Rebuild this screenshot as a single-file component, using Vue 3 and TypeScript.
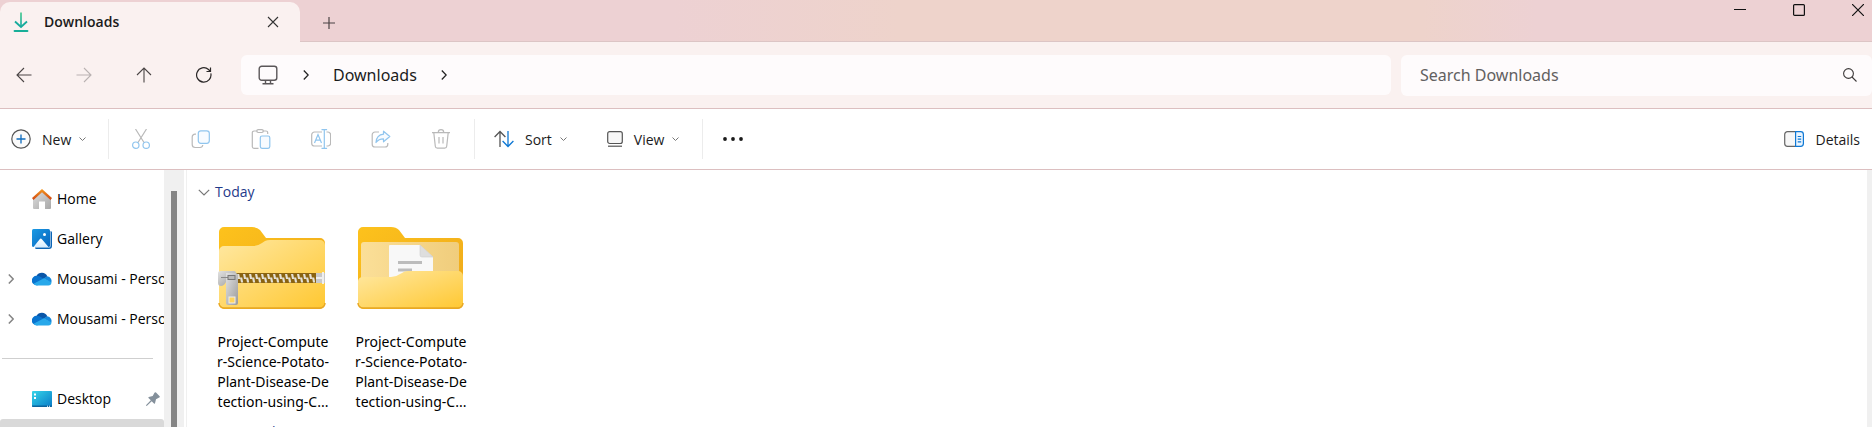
<script setup lang="ts">
interface SideLink { label: string; icon: 'home' | 'gallery' | 'cloud'; expandable: boolean }
interface Entry { id: string; kind: 'zip' | 'folder'; lines: string[] }

const tabTitle = 'Downloads'
const sideLinks: SideLink[] = [
  { label: 'Home', icon: 'home', expandable: false },
  { label: 'Gallery', icon: 'gallery', expandable: false },
  { label: 'Mousami - Personal', icon: 'cloud', expandable: true },
  { label: 'Mousami - Personal', icon: 'cloud', expandable: true },
]
const nameLines = ['Project-Compute', 'r-Science-Potato-', 'Plant-Disease-De', 'tection-using-C...']
const entries: Entry[] = [
  { id: 'archive', kind: 'zip', lines: nameLines },
  { id: 'extracted', kind: 'folder', lines: nameLines },
]
const teeth = Array.from({ length: 13 }, (_, i) => 19 + i * 6)
</script>

<template>
  <div class="window">
    <header class="titlebar">
      <div class="tab">
        <svg class="tab-icon" width="16" height="20" viewBox="0 0 16 20" fill="none">
          <defs>
            <linearGradient id="dl" x1="0" y1="0" x2="0" y2="1">
              <stop offset="0" stop-color="#3cc78a" /><stop offset="1" stop-color="#10a7a0" />
            </linearGradient>
          </defs>
          <path d="M7.2 0.5h1.6v14h-1.6z" fill="url(#dl)" />
          <path d="M2 9.5l6 5.5 6-5.5" stroke="#17ab9c" stroke-width="1.8" />
          <path d="M1.5 19h13" stroke="#17ae98" stroke-width="1.8" stroke-linecap="round" />
        </svg>
        <span class="tab-title">{{ tabTitle }}</span>
        <button class="plain tab-close" aria-label="Close tab">
          <svg width="12" height="12" viewBox="0 0 12 12"><path d="M1 1l10 10M11 1L1 11" stroke="#333" stroke-width="1.1" /></svg>
        </button>
      </div>
      <button class="plain new-tab" aria-label="New tab">
        <svg width="12" height="12" viewBox="0 0 12 12"><path d="M6 0v12M0 6h12" stroke="#4b4344" stroke-width="1.2" /></svg>
      </button>
      <div class="window-controls">
        <button class="plain" aria-label="Minimize">
          <svg width="12" height="12" viewBox="0 0 12 12"><path d="M0 5.5h12" stroke="#111" /></svg>
        </button>
        <button class="plain" aria-label="Maximize">
          <svg width="12" height="12" viewBox="0 0 12 12"><rect x=".6" y=".6" width="10.8" height="10.8" rx="1" fill="none" stroke="#111" stroke-width="1.2" /></svg>
        </button>
        <button class="plain" aria-label="Close">
          <svg width="12" height="12" viewBox="0 0 12 12"><path d="M0 0l12 12M12 0L0 12" stroke="#111" stroke-width="1.2" /></svg>
        </button>
      </div>
    </header>

    <div class="navbar">
      <nav class="nav-buttons" aria-label="History">
        <button class="plain" aria-label="Back">
          <svg width="16" height="16" viewBox="0 0 16 16" fill="none" stroke="#4a4545" stroke-width="1.1"><path d="M15.5 8H1M8 1L1 8l7 7" /></svg>
        </button>
        <button class="plain" aria-label="Forward" disabled>
          <svg width="16" height="16" viewBox="0 0 16 16" fill="none" stroke="#b9b2b2" stroke-width="1.1"><path d="M.5 8H15M8 1l7 7-7 7" /></svg>
        </button>
        <button class="plain" aria-label="Up">
          <svg width="16" height="16" viewBox="0 0 16 16" fill="none" stroke="#4a4545" stroke-width="1.1"><path d="M8 15.500V1M1 8l7-7 7 7" /></svg>
        </button>
        <button class="plain" aria-label="Refresh">
          <svg width="16" height="16" viewBox="0 0 16 16" fill="none" stroke="#2b2828" stroke-width="1.2"><path d="M14.800 6.300A7.200 7.200 0 1 1 12.500 2.500L14 4M14.500 .5v4h-4" /></svg>
        </button>
      </nav>
      <div class="address">
        <svg class="pc" width="20" height="20" viewBox="0 0 20 20" fill="none" stroke="#5b5759" stroke-width="1.4">
          <rect x="1.200" y="1.200" width="17.600" height="14" rx="2.500" /><path d="M7.500 15.500v3M12.500 15.500v3M4.500 18.800h11" />
        </svg>
        <svg class="crumb-sep" width="6" height="10" viewBox="0 0 6 10" fill="none" stroke="#222" stroke-width="1.3"><path d="M.8.5L5.200 5 .8 9.500" /></svg>
        <a class="crumb" href="#downloads">Downloads</a>
        <svg class="crumb-sep" width="6" height="10" viewBox="0 0 6 10" fill="none" stroke="#222" stroke-width="1.3"><path d="M.8.5L5.200 5 .8 9.500" /></svg>
      </div>
      <label class="search">
        <input type="search" placeholder="Search Downloads" aria-label="Search Downloads" />
        <svg width="14" height="14" viewBox="0 0 14 14" fill="none" stroke="#3d3939" stroke-width="1.1"><circle cx="5.500" cy="5.500" r="4.900" /><path d="M9 9l4.500 4.500" /></svg>
      </label>
    </div>

    <div class="toolbar" role="toolbar" aria-label="Commands">
      <button class="plain command new">
        <svg width="20" height="20" viewBox="0 0 20 20" fill="none"><circle cx="10" cy="10" r="9.200" fill="#fafafa" stroke="#555" stroke-width="1.200" /><path d="M10 5.500v9M5.500 10h9" stroke="#0f6cbd" stroke-width="1.300" /></svg>
        <span>New</span>
        <svg class="caret" width="7" height="5" viewBox="0 0 7 5" fill="none" stroke="#777"><path d="M.5.5l3 3 3-3" /></svg>
      </button>
      <div class="edit-group">
        <button class="plain" aria-label="Cut" disabled>
          <svg width="20" height="20" viewBox="0 0 20 20" fill="none" stroke-width="1.200"><path d="M4.500 0l8.500 13.500M15.500 0L7 13.500" stroke="#b9b9b9" /><circle cx="4.800" cy="16.200" r="3.200" stroke="#90c5ee" /><circle cx="15.200" cy="16.200" r="3.200" stroke="#90c5ee" /></svg>
        </button>
        <button class="plain" aria-label="Copy" disabled>
          <svg width="20" height="20" viewBox="0 0 20 20" fill="none" stroke-width="1.200"><path d="M5 5.200H4A2.800 2.800 0 0 0 1.200 8v7.500A3 3 0 0 0 4.200 18.500H9a3 3 0 0 0 2.800-2.500" stroke="#b9b9b9" /><rect x="7.300" y="1.800" width="11" height="12.500" rx="2.500" fill="#f7fbff" stroke="#90c5ee" /></svg>
        </button>
        <button class="plain" aria-label="Paste" disabled>
          <svg width="20" height="20" viewBox="0 0 20 20" fill="none" stroke-width="1.200"><path d="M6 2H3a1.700 1.700 0 0 0-1.700 1.700v14A1.700 1.700 0 0 0 3 19.300h4.500M12 2h3a1.700 1.700 0 0 1 1.700 1.700V5" stroke="#b9b9b9" /><rect x="5.800" y=".7" width="6.500" height="2.800" rx="1.400" stroke="#b9b9b9" /><rect x="9.300" y="7" width="9.500" height="12.300" rx="1.700" fill="#f7fbff" stroke="#90c5ee" /></svg>
        </button>
        <button class="plain" aria-label="Rename" disabled>
          <svg width="20" height="20" viewBox="0 0 20 20" fill="none" stroke-width="1.200"><path d="M11 3H3.500A2.800 2.800 0 0 0 .7 5.800v8.400A2.800 2.800 0 0 0 3.500 17H11M15.500 3h1.300a2.800 2.800 0 0 1 2.800 2.800v8.400a2.800 2.800 0 0 1-2.800 2.800h-1.300" stroke="#b9b9b9" /><path d="M3.500 14L7 5.500l3.500 8.500M4.700 11.200h4.600M13.300 .8v18.400M10.500 .6h5.600M10.500 19.400h5.600" stroke="#90c5ee" /></svg>
        </button>
        <button class="plain" aria-label="Share" disabled>
          <svg width="20" height="20" viewBox="0 0 20 20" fill="none" stroke-width="1.200" stroke-linejoin="round"><path d="M8 3H4A2.800 2.800 0 0 0 1.200 5.800v9.400A2.800 2.800 0 0 0 4 18h10a2.800 2.800 0 0 0 2.800-2.800V14" stroke="#b9b9b9" /><path d="M12.500 2.200l6.300 5.300-6.300 5.300V9.900c-3.500 0-5.600 1-7.500 3.600.3-4.800 3-7.800 7.500-8.300z" fill="#f7fbff" stroke="#90c5ee" /></svg>
        </button>
        <button class="plain" aria-label="Delete" disabled>
          <svg width="20" height="20" viewBox="0 0 20 20" fill="none" stroke="#b9b9b9" stroke-width="1.200"><path d="M1 3.600h18M7.300 3.400a2.700 2.700 0 0 1 5.400 0M2.800 3.800l1.500 13.500a2 2 0 0 0 2 1.900h7.400a2 2 0 0 0 2-1.900l1.500-13.500M8 8v6.500M12 8v6.500" /></svg>
        </button>
      </div>
      <div class="view-group">
        <button class="plain command">
          <svg width="20" height="18" viewBox="0 0 20 18" fill="none" stroke-width="1.300"><path d="M6 17V1.500M.6 7L6 1.500 11.400 7" stroke="#555" /><path d="M14 1v15.500M8.600 11l5.400 5.500 5.400-5.500" stroke="#0f78d4" /></svg>
          <span>Sort</span>
          <svg class="caret" width="7" height="5" viewBox="0 0 7 5" fill="none" stroke="#777"><path d="M.5.5l3 3 3-3" /></svg>
        </button>
        <button class="plain command view">
          <svg width="16" height="16" viewBox="0 0 16 16" fill="none" stroke="#555" stroke-width="1.200"><rect x=".7" y=".7" width="14.600" height="11.800" rx="2" fill="#f7f7f7" /><path d="M1 15.200h14" /></svg>
          <span>View</span>
          <svg class="caret" width="7" height="5" viewBox="0 0 7 5" fill="none" stroke="#777"><path d="M.5.5l3 3 3-3" /></svg>
        </button>
      </div>
      <button class="plain more" aria-label="See more">
        <svg width="20" height="4" viewBox="0 0 20 4" fill="#1a1a1a"><circle cx="2" cy="2" r="1.900" /><circle cx="10" cy="2" r="1.900" /><circle cx="18" cy="2" r="1.900" /></svg>
      </button>
      <button class="plain command details">
        <svg width="20" height="16" viewBox="0 0 20 16" fill="none" stroke-width="1.200"><path d="M12 .7H3.500A2.800 2.800 0 0 0 .7 3.500v9a2.800 2.800 0 0 0 2.800 2.800H12" fill="#f7f7f7" stroke="#666" /><path d="M11.600.7h5a2.800 2.800 0 0 1 2.800 2.800v9a2.800 2.800 0 0 1-2.800 2.800h-5zM13.700 5.500h3.500M13.700 8.200h3.500M13.700 10.900h3.500" fill="#eaf5ff" stroke="#0f78d4" /></svg>
        <span>Details</span>
      </button>
    </div>

    <div class="body">
      <aside class="sidebar">
        <nav class="tree" aria-label="Navigation pane">
          <a v-for="(item, i) in sideLinks" :key="i" class="tree-row" href="#">
            <span class="twist"><svg v-if="item.expandable" width="6" height="10" viewBox="0 0 6 10" fill="none" stroke="#858585" stroke-width="1.500"><path d="M.8.5L5.200 5 .8 9.500" /></svg></span>
            <svg v-if="item.icon === 'home'" width="20" height="20" viewBox="0 0 20 20">
              <defs>
                <linearGradient id="wall" x1="0" y1="0" x2="1" y2="1"><stop offset="0" stop-color="#dedede" /><stop offset="1" stop-color="#a8a8a8" /></linearGradient>
                <linearGradient id="roof" x1="0" y1="0" x2="0" y2="1"><stop offset="0" stop-color="#f59a20" /><stop offset="1" stop-color="#cf4513" /></linearGradient>
              </defs>
              <path d="M1 9.500L10 1.500l9 8V19a1 1 0 0 1-1 1h-5v-7.500H7V20H2a1 1 0 0 1-1-1z" fill="url(#wall)" />
              <path d="M10 0l10 9-1.500 2L10 3.200 1.500 11 0 9z" fill="url(#roof)" />
            </svg>
            <svg v-else-if="item.icon === 'gallery'" width="20" height="20" viewBox="0 0 20 20">
              <defs>
                <linearGradient id="pic" x1="0" y1="0" x2="1" y2="1"><stop offset="0" stop-color="#1a9ae4" /><stop offset="1" stop-color="#0864bd" /></linearGradient>
                <linearGradient id="peak" x1="0" y1="0" x2="0" y2="1"><stop offset="0" stop-color="#fff" /><stop offset="1" stop-color="#d5edff" /></linearGradient>
              </defs>
              <path d="M3 18.500h14a1.500 1.500 0 0 0 1.500-1.500V2a1.500 1.500 0 0 1 1.500 1.500V17a3 3 0 0 1-3 3H4.500A1.500 1.500 0 0 1 3 18.500z" fill="#0b64b5" />
              <rect width="18" height="18" rx="1.500" fill="url(#pic)" />
              <path d="M1.500 18l6.200-7.800a1.400 1.400 0 0 1 2.200 0L16.500 18z" fill="url(#peak)" /><circle cx="12.500" cy="5.500" r="1.500" fill="#fff" />
            </svg>
            <svg v-else width="20" height="14" viewBox="0 0 20 14">
              <path d="M4.500 4A6 6 0 0 1 15.300 4.300L11 8z" fill="#0a56a8" />
              <path d="M4.500 3.800A5 5 0 0 1 7.500 4.200L13 7.500 6 13.200H4.500A4.600 4.600 0 0 1 4.500 3.800z" fill="#0873cf" />
              <path d="M11.500 6.600L15.300 4.300A4.600 4.600 0 0 1 19 11z" fill="#1488dc" />
              <path d="M1.600 11.800L12 6.200l7.500 4.300A3.300 3.300 0 0 1 16 13.500H4.500a4 4 0 0 1-2.900-1.700z" fill="#28a8ea" />
            </svg>
            <span class="tree-label">{{ item.label }}</span>
          </a>
          <hr class="divider" />
          <a class="tree-row" href="#desktop">
            <span class="twist"></span>
            <svg width="20" height="16" viewBox="0 0 20 16">
              <defs><linearGradient id="desk" x1="0" y1="0" x2="1" y2="1"><stop offset="0" stop-color="#35d5e8" /><stop offset="1" stop-color="#087bc8" /></linearGradient></defs>
              <rect width="20" height="16" rx="1" fill="url(#desk)" /><path d="M0 14.500h20V15a1 1 0 0 1-1 1H1a1 1 0 0 1-1-1z" fill="#0b639c" />
              <path d="M2 2.500h2v2H2zM2 6h2v2H2zM15 14.700h1v1h-1zM17 14.700h1v1h-1z" fill="#fff" />
            </svg>
            <span class="tree-label">Desktop</span>
            <svg class="pin" width="14" height="14" viewBox="0 0 14 14"><path d="M8.500.8a1 1 0 0 1 1.500-.2L13.400 4a1 1 0 0 1-.2 1.600L10 7.300 9 11.200a.6.6 0 0 1-1 .3L5.700 9.200 1 13.800l-.9.1.1-.9L4.800 8.300 2.500 6a.6.6 0 0 1 .3-1l3.900-1z" fill="#84909b" /></svg>
          </a>
          <div class="selected-row"></div>
        </nav>
        <div class="track"><div class="thumb"></div></div>
      </aside>
      <main class="files">
        <h2 class="group">
          <svg width="12" height="7" viewBox="0 0 12 7" fill="none" stroke="#777" stroke-width="1.200"><path d="M.8.8L6 6 11.200.8" /></svg>
          <span>Today</span>
        </h2>
        <div class="grid">
          <a v-for="entry in entries" :key="entry.id" class="entry" href="#">
            <svg v-if="entry.kind === 'zip'" class="zip" width="108" height="84" viewBox="1 0 108 84">
              <defs>
                <linearGradient id="zb" x1="0" y1="0" x2="1" y2="1"><stop offset="0" stop-color="#fdc21c" /><stop offset="1" stop-color="#eda71b" /></linearGradient>
                <linearGradient id="zf" x1="0" y1="0" x2="1" y2="1"><stop offset="0" stop-color="#ffe8a2" /><stop offset="1" stop-color="#ffc832" /></linearGradient>
                <linearGradient id="metal" x1="0" y1="0" x2="1" y2="1"><stop offset="0" stop-color="#e2e2e2" /><stop offset="1" stop-color="#9a9a9a" /></linearGradient>
              </defs>
              <path d="M1 6a5 5 0 0 1 5-5h28q5 0 8 3l6 8h54a5 5 0 0 1 5 5v61a5 5 0 0 1-5 5H6a5 5 0 0 1-5-5z" fill="url(#zb)" />
              <path d="M1 25a5 5 0 0 1 5-5h29q5 0 9-3l3-2q2-1 5-1h50a5 5 0 0 1 5 5v58a5 5 0 0 1-5 5H6a5 5 0 0 1-5-5z" fill="url(#zf)" />
              <path d="M1 77a5 5 0 0 0 5 5h96a5 5 0 0 0 5-5" fill="none" stroke="#e8a824" stroke-width="1.500" />
              <rect x="18" y="47" width="82" height="10" fill="#8a6310" />
              <g v-for="x in teeth" :key="x" fill="#e5e1d6"><path :d="`M${x} 48h2.200l1 5h-2.200zM${x + 3} 51.500h2.200l1 5h-2.200z`" /></g>
              <path d="M98 47h9v10h-9z" fill="#c9c9c9" /><path d="M98 52h7M105 46v12" stroke="#efefef" stroke-width="2" />
              <path d="M0 47q0-2 3-2h13a2 2 0 0 1 2 2v9H8q-2 4-5 4-3 0-3-3z" fill="url(#metal)" />
              <path d="M8 47h9a3 3 0 0 1 3 3v27a2 2 0 0 1-2 2h-8a2 2 0 0 1-2-2z" fill="url(#metal)" />
              <path d="M3 51.500h12" stroke="#8b8b8b" /><rect x="10" y="49.500" width="7" height="4" fill="#b8b8b8" stroke="#777" />
              <rect x="11" y="71" width="6" height="6" fill="#ffd45b" stroke="#eee" />
            </svg>
            <svg v-else width="108" height="84" viewBox="0 0 108 84">
              <defs>
                <linearGradient id="ob" x1="0" y1="0" x2="1" y2="1"><stop offset="0" stop-color="#fdc21c" /><stop offset="1" stop-color="#eda71b" /></linearGradient>
                <linearGradient id="of" x1="0" y1="0" x2="1" y2="1"><stop offset="0" stop-color="#ffe8a2" /><stop offset="1" stop-color="#ffc832" /></linearGradient>
                <linearGradient id="oi" x1="0" y1="0" x2="1" y2="0"><stop offset="0" stop-color="#fbdf98" /><stop offset="1" stop-color="#f0cd7c" /></linearGradient>
              </defs>
              <path d="M1 6a5 5 0 0 1 5-5h28q5 0 8 3l6 8h53a5 5 0 0 1 5 5v61a5 5 0 0 1-5 5H6a5 5 0 0 1-5-5z" fill="url(#ob)" />
              <rect x="4" y="16" width="98" height="44" rx="3" fill="url(#oi)" />
              <path d="M32 20a1 1 0 0 1 1-1h30l13 12v30H32z" fill="#f8f8f8" /><path d="M63 19l13 12H65a2 2 0 0 1-2-2z" fill="#dedede" stroke="#cfcfcf" stroke-width=".6" />
              <path d="M41 36.500h24M41 44h14" stroke="#bcbcbc" stroke-width="3" />
              <path d="M1 55a5 5 0 0 1 5-4h28q5 0 9-3l2-1q2-2 6-2h50a5 5 0 0 1 5 5v27a5 5 0 0 1-5 5H6a5 5 0 0 1-5-5z" fill="url(#of)" />
              <path d="M1 77a5 5 0 0 0 5 5h95a5 5 0 0 0 5-5" fill="none" stroke="#e8a824" stroke-width="1.500" />
            </svg>
            <span class="name"><span v-for="line in entry.lines" :key="line">{{ line }}</span></span>
          </a>
        </div>
        <h2 class="group later"><span>Last week</span></h2>
      </main>
      <div class="edge-track"></div>
    </div>
  </div>
</template>

<style>
html, body { margin: 0; background: #fff; }
</style>

<style scoped>
.window { height: 100vh; display: flex; flex-direction: column; overflow: hidden; font-family: "Open Sans", "Noto Sans", sans-serif; font-size: 14px; line-height: 20px; color: #1b1b1b; background: #fff; }
.plain { display: flex; align-items: center; justify-content: center; padding: 0; border: 0; background: none; font: inherit; color: inherit; }
a { color: inherit; text-decoration: none; }
svg { flex: none; display: block; }

.titlebar { flex: none; display: flex; height: 42px; box-sizing: border-box; border-bottom: 1px solid #dcc5c5; background: linear-gradient(90deg, #edd1d3 0 36%, #eed3cb 48%, #eed3cb 76%, #edd1d3 82%); }
.tab { display: flex; align-items: center; width: 300px; height: 40px; margin-top: 2px; box-sizing: border-box; padding: 0 21px 0 13px; border-radius: 10px 10px 0 0; background: #faf1f0; }
.tab-title { flex: 1; margin-left: 15px; font-size: 14px; font-weight: 600; }
.new-tab { width: 58px; margin-top: 5px; }
.window-controls { display: flex; align-items: flex-start; gap: 47px; margin-left: auto; padding: 4px 8px 0 0; }

.navbar { flex: none; display: flex; align-items: center; gap: 10px; height: 67px; box-sizing: border-box; border-bottom: 1px solid #dcbfc0; background: #faf1f0; }
.nav-buttons { display: flex; align-items: center; gap: 44px; padding: 0 19px 0 16px; }
.address { flex: 1; display: flex; align-items: center; height: 40px; padding-left: 17px; border-radius: 6px; background: #fefbfc; }
.crumb-sep { margin-left: 25px; }
.crumb { margin-left: 24px; font-family: "Noto Sans", sans-serif; font-size: 16px; }
.crumb + .crumb-sep { margin-left: 24px; }
.search { display: flex; align-items: center; width: 471px; height: 41px; box-sizing: border-box; padding: 0 15px 0 19px; border-radius: 6px; background: #fefbfc; }
.search input { flex: 1; min-width: 0; padding: 0; border: 0; outline: 0; background: none; font-family: "Noto Sans", sans-serif; font-size: 16px; color: #333; }
.search input::placeholder { color: #626060; opacity: 1; }

.toolbar { flex: none; display: flex; align-items: center; height: 61px; box-sizing: border-box; border-bottom: 1px solid #dcbfc0; background: #fff; }
.command { justify-content: flex-start; }
.command span { margin-left: 11px; padding-top: 1px; }
.command .caret { margin-left: 8px; }
.new { width: 108px; padding-left: 11px; box-sizing: border-box; }
.edit-group, .view-group { display: flex; align-items: center; height: 40px; box-sizing: border-box; border-left: 1px solid #ececec; border-right: 1px solid #ececec; }
.edit-group { gap: 40px; padding: 0 23px 0 22px; }
.view-group { padding: 0 23px 0 19px; border-left: 0; gap: 40px; }
.more { margin-left: 20px; }
.details { margin-left: auto; padding-right: 12px; }

.body { flex: 1; min-height: 0; display: flex; overflow: hidden; }
.sidebar { flex: none; display: flex; width: 186px; border-right: 1px solid #f0f0f0; }
.tree { flex: 1; min-width: 0; padding-top: 9px; overflow: hidden; }
.tree-row { display: flex; align-items: center; height: 40px; color: #000; }
.twist { flex: none; width: 24px; padding-left: 8px; }
.tree-label { flex: 1; margin-left: 5px; white-space: nowrap; overflow: hidden; }
.pin { margin-right: 4px; }
.divider { height: 1px; margin: 19px 11px 20px 2px; border: 0; background: #cfcfcf; }
.selected-row { height: 40px; border-radius: 3px; background: #d9d9d9; }
.track { flex: none; width: 20px; margin-right: 2px; padding-top: 21px; box-sizing: border-box; background: #f0f0f0; }
.thumb { width: 6px; height: 100%; margin-left: 7px; background: #858585; }

.files { flex: 1; min-width: 0; padding: 12px 0 0 11px; overflow: hidden; }
.group { display: flex; align-items: center; gap: 5px; margin: 0; font-size: 14px; font-weight: 400; line-height: 20px; color: #1f3a8a; }
.grid { display: flex; flex-wrap: wrap; gap: 18px; padding: 24px 0 0 15px; }
.entry { display: flex; flex-direction: column; align-items: center; width: 120px; color: #000; }
.zip { overflow: visible; }
.name { display: flex; flex-direction: column; align-items: center; margin-top: 22px; font-family: "Noto Sans", sans-serif; white-space: nowrap; }
.later { margin-top: 10px; padding-left: 17px; }
.edge-track { flex: none; width: 5px; background: #f0f0f0; }
</style>
